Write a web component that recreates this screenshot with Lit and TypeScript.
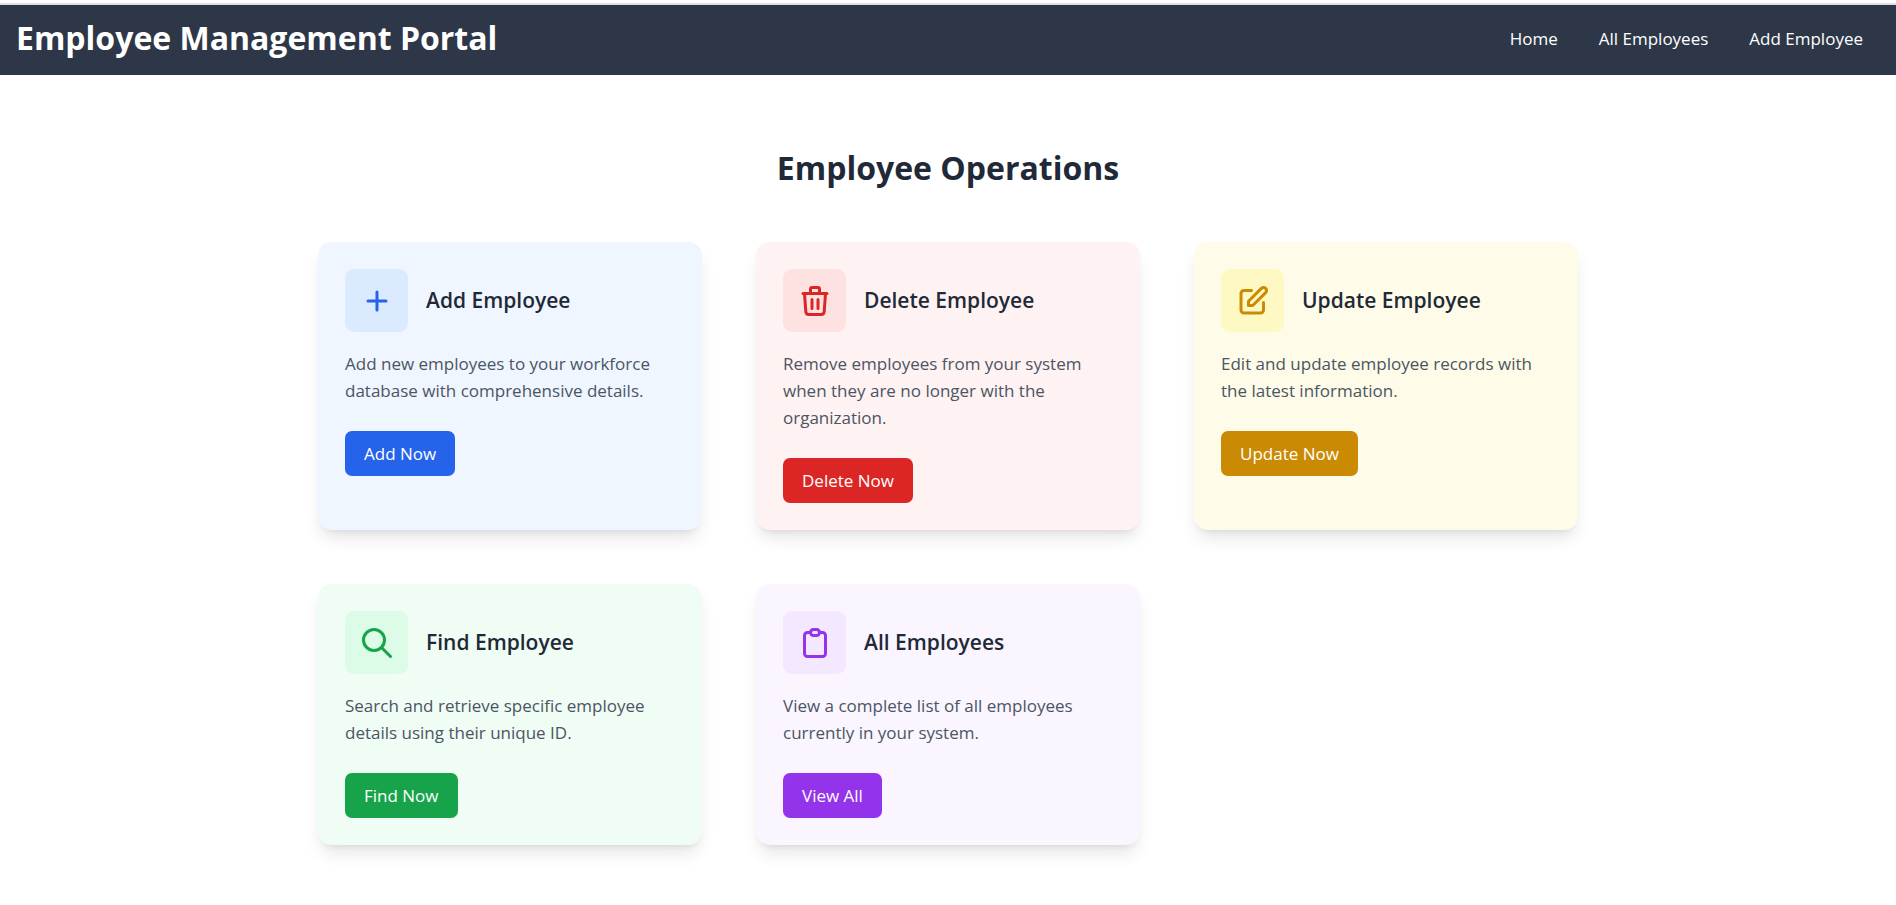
import { LitElement, html, css, svg } from "lit";
import { customElement, property } from "lit/decorators.js";

type Tone = "blue" | "red" | "yellow" | "green" | "purple";

interface Operation {
  tone: Tone;
  title: string;
  text: string;
  action: string;
  icon: string;
}

const OPERATIONS: Operation[] = [
  {
    tone: "blue",
    title: "Add Employee",
    text: "Add new employees to your workforce database with comprehensive details.",
    action: "Add Now",
    icon: "M12 6v6m0 0v6m0-6h6m-6 0H6",
  },
  {
    tone: "red",
    title: "Delete Employee",
    text: "Remove employees from your system when they are no longer with the organization.",
    action: "Delete Now",
    icon: "M19 7l-.867 12.142A2 2 0 0116.138 21H7.862a2 2 0 01-1.995-1.858L5 7m5 4v6m4-6v6m1-10V4a1 1 0 00-1-1h-4a1 1 0 00-1 1v3M4 7h16",
  },
  {
    tone: "yellow",
    title: "Update Employee",
    text: "Edit and update employee records with the latest information.",
    action: "Update Now",
    icon: "M11 5H6a2 2 0 00-2 2v11a2 2 0 002 2h11a2 2 0 002-2v-5m-1.414-9.414a2 2 0 112.828 2.828L11.828 15H9v-2.828l8.586-8.586z",
  },
  {
    tone: "green",
    title: "Find Employee",
    text: "Search and retrieve specific employee details using their unique ID.",
    action: "Find Now",
    icon: "M21 21l-6-6m2-5a7 7 0 11-14 0 7 7 0 0114 0z",
  },
  {
    tone: "purple",
    title: "All Employees",
    text: "View a complete list of all employees currently in your system.",
    action: "View All",
    icon: "M9 5H7a2 2 0 00-2 2v12a2 2 0 002 2h10a2 2 0 002-2V7a2 2 0 00-2-2h-2M9 5a2 2 0 002 2h2a2 2 0 002-2M9 5a2 2 0 012-2h2a2 2 0 012 2",
  },
];

@customElement("operation-card")
export class OperationCard extends LitElement {
  @property({ attribute: false }) operation!: Operation;

  static styles = css`
    :host {
      display: grid;
    }
    .card {
      padding: 27px;
      border-radius: 14px;
      background: var(--surface);
      box-shadow: 0 11px 17px -3px rgb(0 0 0 / 0.1), 0 5px 7px -5px rgb(0 0 0 / 0.1);
    }
    .blue { --surface: #eff6ff; --tint: #dbeafe; --accent: #2563eb; }
    .red { --surface: #fef2f2; --tint: #fee2e2; --accent: #dc2626; }
    .yellow { --surface: #fefce8; --tint: #fef9c3; --accent: #ca8a04; }
    .green { --surface: #f0fdf4; --tint: #dcfce7; --accent: #16a34a; }
    .purple { --surface: #faf5ff; --tint: #f3e8ff; --accent: #9333ea; }
    .head {
      display: flex;
      align-items: center;
      gap: 18px;
      margin-bottom: 18px;
    }
    .badge {
      display: grid;
      place-items: center;
      flex: none;
      width: 63px;
      height: 63px;
      border-radius: 9px;
      background: var(--tint);
    }
    .icon {
      width: 36px;
      height: 36px;
      fill: none;
      stroke: var(--accent);
      stroke-width: 2;
      stroke-linecap: round;
      stroke-linejoin: round;
    }
    .title {
      margin: 0;
      padding-bottom: 2px;
      font-size: 21px;
      line-height: 32px;
      font-weight: 600;
      color: #1f2937;
    }
    .text {
      margin: 0 0 27px;
      font-size: 17px;
      line-height: 27px;
      color: #4b5563;
    }
    .action {
      padding: 9px 19px;
      border: 0;
      border-radius: 7px;
      background: var(--accent);
      color: #fff;
      font-family: inherit;
      font-size: 17px;
      line-height: 27px;
      cursor: pointer;
    }
  `;

  render() {
    const { tone, title, text, action, icon } = this.operation;
    return html`
      <article class="card ${tone}">
        <div class="head">
          <div class="badge">
            <svg class="icon" viewBox="0 0 24 24" aria-hidden="true">${svg`<path d=${icon}></path>`}</svg>
          </div>
          <h3 class="title">${title}</h3>
        </div>
        <p class="text">${text}</p>
        <button class="action" type="button">${action}</button>
      </article>
    `;
  }
}

@customElement("app-root")
export class AppRoot extends LitElement {
  static styles = css`
    :host {
      display: block;
      padding-top: 3px;
      font-family: "Open Sans", "Noto Sans", sans-serif;
      background: #fff;
    }
    .bar {
      display: flex;
      align-items: center;
      justify-content: space-between;
      flex-wrap: wrap;
      padding: 13px 33px 17px 16px;
      border-top: 2px solid #e0e0e0;
      background: #2d3748;
      color: #fff;
    }
    .brand {
      margin: 0;
      font-size: 32px;
      line-height: 40px;
      font-weight: 700;
    }
    .nav {
      display: flex;
      gap: 41px;
    }
    .link {
      color: inherit;
      font-size: 17px;
      line-height: 27px;
      text-decoration: none;
    }
    .main {
      max-width: 1260px;
      margin: 0 auto;
      padding: 73px 18px 54px;
    }
    .heading {
      margin: 0 0 54px;
      font-size: 32px;
      line-height: 40px;
      font-weight: 700;
      text-align: center;
      color: #1f2937;
    }
    .grid {
      display: grid;
      grid-template-columns: repeat(3, minmax(0, 1fr));
      gap: 54px;
    }
    @media (max-width: 1100px) {
      .grid {
        grid-template-columns: repeat(2, minmax(0, 1fr));
      }
    }
    @media (max-width: 720px) {
      .grid {
        grid-template-columns: minmax(0, 1fr);
      }
    }
  `;

  render() {
    return html`
      <header class="bar">
        <h1 class="brand">Employee Management Portal</h1>
        <nav class="nav">
          <a class="link" href="#home">Home</a>
          <a class="link" href="#employees">All Employees</a>
          <a class="link" href="#add">Add Employee</a>
        </nav>
      </header>
      <main class="main">
        <h2 class="heading">Employee Operations</h2>
        <div class="grid">
          ${OPERATIONS.map((op) => html`<operation-card .operation=${op}></operation-card>`)}
        </div>
      </main>
    `;
  }
}
